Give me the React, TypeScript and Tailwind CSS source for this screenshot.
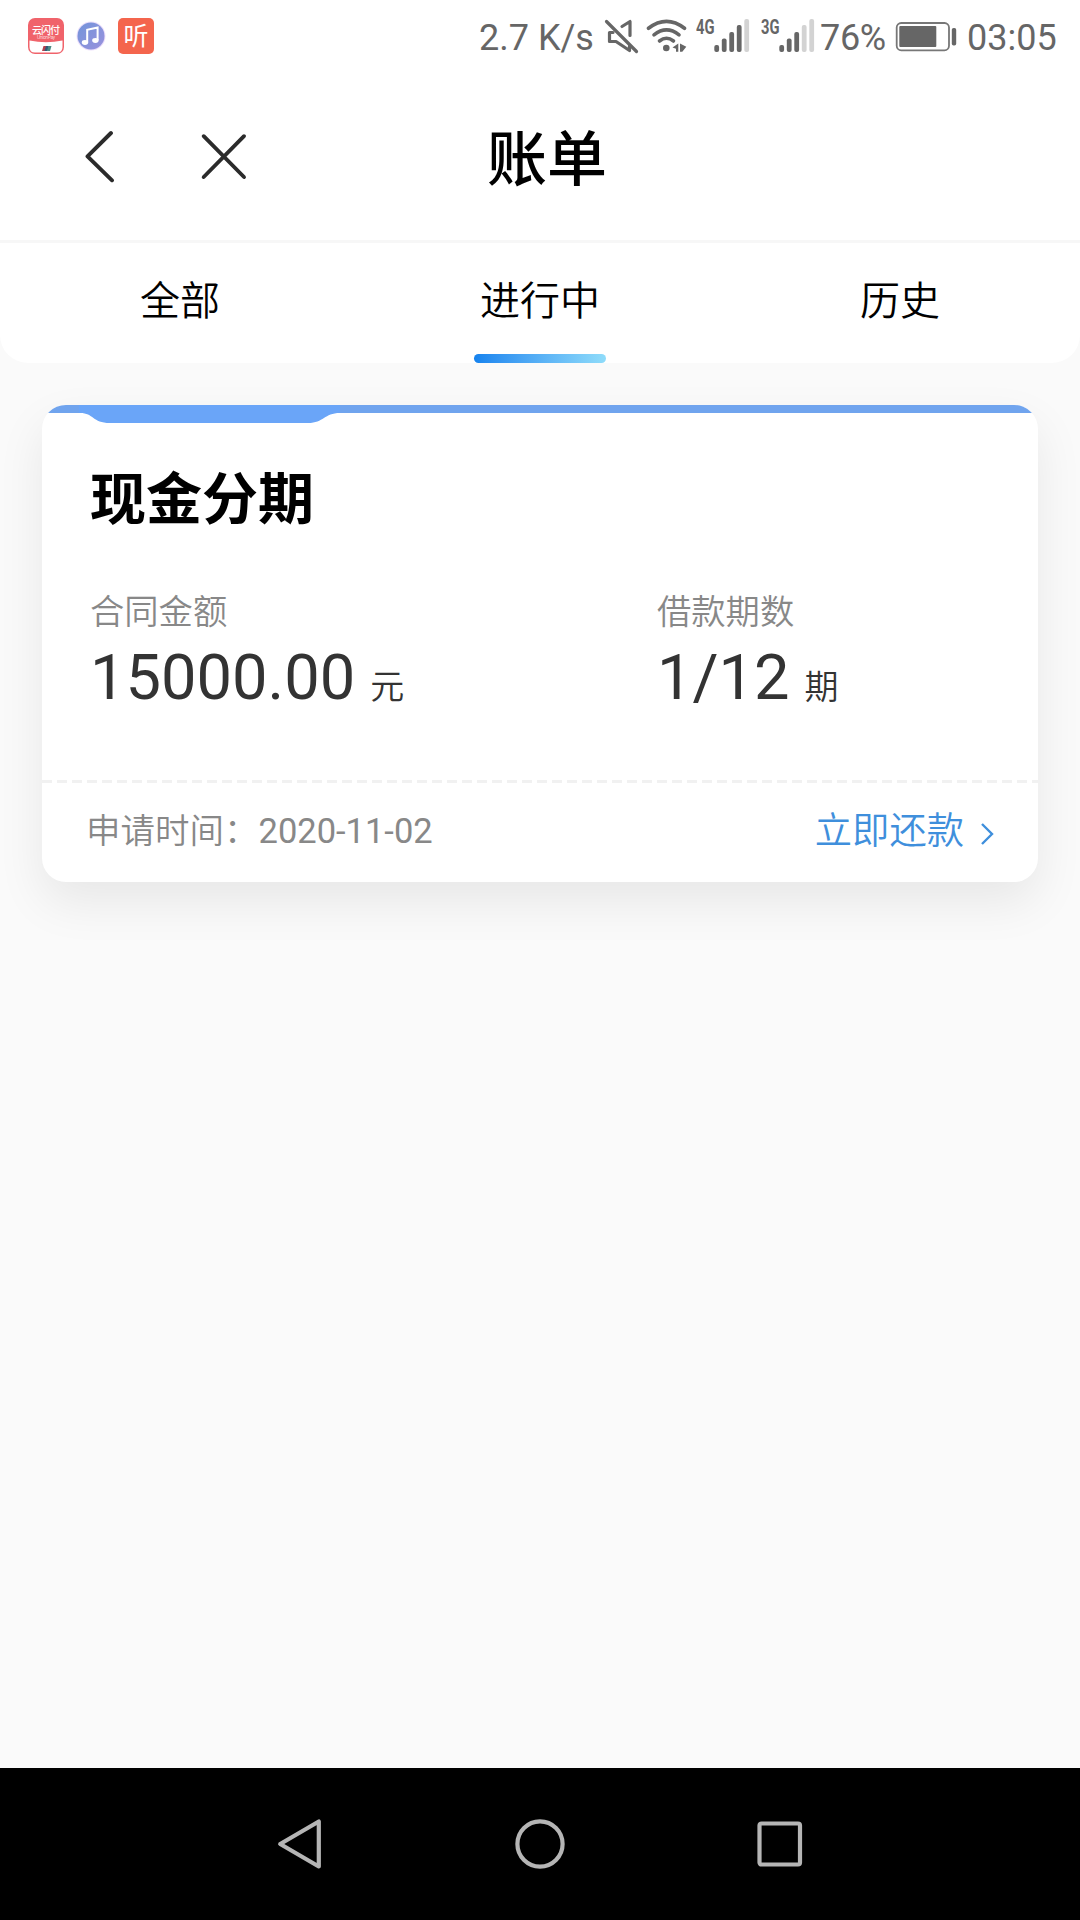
const FONT = "font-[Roboto,'Noto_Sans_CJK_SC',sans-serif]";

function Signal({ label, strong }: { label: string; strong: number }) {
  const tops = [45, 38.5, 32, 25, 19];
  return (
    <svg className="h-[72px] w-[56px] shrink-0" viewBox="0 0 56 72">
      <text x="0" y="33.6" fontSize="20" fontWeight="700" textLength="18.5" lengthAdjust="spacingAndGlyphs" fill="#666">
        {label}
      </text>
      {tops.map((t, i) => (
        <rect key={t} x={18.3 + i * 7.5} y={t} width="4.8" height={52 - t} rx="2" fill={i < strong ? "#666" : "#d3d3d3"} />
      ))}
    </svg>
  );
}

function StatusBar() {
  return (
    <div className="flex h-[72px] items-center bg-white text-[36px] leading-[42px] text-[#666]">
      <svg className="ml-[28px] size-9 shrink-0" viewBox="0 0 36 36">
        <defs>
          <clipPath id="payClip"><rect width="36" height="36" rx="7" /></clipPath>
        </defs>
        <g clipPath="url(#payClip)">
          <rect width="36" height="36" fill="#f0636b" />
          <path d="M1.5 22.5Q18 26 34.5 22.5V29Q34.5 34.5 29 34.5H7Q1.5 34.5 1.5 29Z" fill="#fff" />
        </g>
        <text x="4" y="15.5" fontSize="10" fontWeight="500" fill="#fff" textLength="28">云闪付</text>
        <text x="9" y="21" fontSize="5" fill="#fbd0d2" textLength="18">UnionPay</text>
        <path d="M15.5 28H19L17.5 33H14Z" fill="#b5404c" />
        <path d="M18 28H21L19.5 33H16.5Z" fill="#345a78" />
        <path d="M20.5 28H23.5L22 33H19Z" fill="#4a8b83" />
      </svg>
      <svg className="ml-[12px] size-[30px] shrink-0" viewBox="0 0 30 30">
        <defs>
          <linearGradient id="music" x1="0" y1="0" x2="1" y2="1">
            <stop offset="0" stopColor="#7294da" />
            <stop offset="1" stopColor="#9a92dd" />
          </linearGradient>
        </defs>
        <circle cx="15" cy="15" r="14.5" fill="#ecdffb" />
        <circle cx="15" cy="15" r="13.5" fill="url(#music)" />
        <path d="M11.2 21.3V8.8L21.6 6.5V19.3" fill="none" stroke="#fff" strokeWidth="2" />
        <ellipse cx="9" cy="21.5" rx="3.2" ry="2.4" fill="#fff" />
        <ellipse cx="19.4" cy="19.5" rx="3.2" ry="2.4" fill="#fff" />
      </svg>
      <div className="ml-[12px] flex size-9 shrink-0 items-center justify-center rounded-[5px] bg-[#f4654d] text-[25px] leading-9 text-white">
        <span className="mt-px">听</span>
      </div>

      <span className="mt-[3px] ml-auto w-[115px] whitespace-nowrap">2.7 K/s</span>
      <svg className="ml-[10px] h-[72px] w-[36px] shrink-0" viewBox="604 0 36 72" fill="none" stroke="#666" strokeWidth="3.2" strokeLinejoin="round" strokeLinecap="round">
        <path d="M606.5 21.5L636.5 51.5" />
        <path d="M613 32.5H609.5V41.5H616L629.5 50.5V46" />
        <path d="M622 26.5L630 21.5V35.5" />
      </svg>
      <svg className="ml-[6px] h-[72px] w-[41px] shrink-0" viewBox="646 0 41 72" fill="none" stroke="#666" strokeWidth="3.6" strokeLinecap="round">
        <path d="M648.5 28.3Q666.5 14.5 684.5 28.3" />
        <path d="M654 34.8Q666.5 25 679 34.8" />
        <path d="M659.5 41Q666.5 35.5 673.5 41" />
        <circle cx="666.3" cy="48" r="3.3" fill="#666" stroke="none" />
        <path d="M672.5 47.5L678.3 43.5V51.8H676V48.8ZM680 43.5L686.3 46.7L682.3 51.8H680Z" fill="#666" stroke="none" />
      </svg>
      <div className="ml-[9px] flex gap-[9px]">
        <Signal label="4G" strong={4} />
        <Signal label="3G" strong={3} />
      </div>
      <span className="mt-[3px] ml-[3px] w-[66px] whitespace-nowrap tracking-[-0.3px]">76%</span>
      <svg className="ml-[9px] h-[72px] w-[62px] shrink-0" viewBox="895 0 62 72">
        <rect x="896.7" y="23" width="52.3" height="27.3" rx="4.5" fill="none" stroke="#777" strokeWidth="1.8" />
        <rect x="899.3" y="26" width="37" height="21" rx="1" fill="#666" />
        <rect x="951.8" y="28" width="4.4" height="17.5" rx="1.8" fill="#666" />
      </svg>
      <span className="mt-[3px] mr-[18px] ml-[10px] w-[95px] whitespace-nowrap">03:05</span>
    </div>
  );
}

function Header() {
  return (
    <header className="flex h-[171px] items-center border-b-3 border-[#f7f7f7] bg-white">
      <svg className="ml-[84px] h-[54px] w-[32px]" viewBox="84 129 32 54" fill="none" stroke="#2b2b2b" strokeWidth="3.9" strokeLinecap="round" strokeLinejoin="round">
        <path d="M111 133L87.5 156.3L112 180.3" />
      </svg>
      <svg className="ml-[84px] h-[54px] w-[48px]" viewBox="200 129 48 54" fill="none" stroke="#2b2b2b" strokeWidth="3.9" strokeLinecap="round">
        <path d="M203.7 136.2L244 177M244 136.2L203.7 177" />
      </svg>
      <h1 className="mt-[10px] ml-[239px] text-[60px] leading-[72px] font-medium text-black">账单</h1>
    </header>
  );
}

function Tabs() {
  const tabs = ["全部", "进行中", "历史"];
  return (
    <nav className="grid h-[120px] grid-cols-3 rounded-b-[28px] bg-white text-[40px] leading-[60px] font-[350] text-black">
      {tabs.map((t, i) => (
        <div key={t} className="flex flex-col items-center justify-between pt-[29px]">
          <span>{t}</span>
          {i === 1 && <span className="h-[9px] w-[132px] rounded-full bg-linear-to-r from-[#1583ee] to-[#8fdcfa]" />}
        </div>
      ))}
    </nav>
  );
}

function Amount({ label, value, unit }: { label: string; value: string; unit: string }) {
  return (
    <div>
      <div className="-ml-px text-[34.3px] leading-[50px] font-[350] text-[#888]">{label}</div>
      <div className="mt-[2px] flex items-baseline leading-[76px] text-[#333]">
        <span className="-ml-px text-[63.2px]">{value}</span>
        <span className="ml-[15px] text-[34px] font-[350]">{unit}</span>
      </div>
    </div>
  );
}

function BillCard() {
  return (
    <section className="mx-[42px] mt-[42px] flex h-[477px] flex-col overflow-hidden rounded-[24px] bg-white shadow-[0_20px_48px_rgba(0,0,0,0.08)]">
      <svg className="h-[18px] w-[996px] shrink-0" viewBox="0 0 996 18">
        <rect width="996" height="8" fill="#70a4ee" />
        <path d="M37 0V8H38C52 8 50 18 68 18H266C282 18 282 8 298 8V0Z" fill="#6aa5f8" />
      </svg>
      <h2 className="mt-[35px] ml-[48px] text-[56px] leading-[84px] font-bold text-black">现金分期</h2>
      <div className="mt-[44.5px] grid grid-cols-[567px_1fr] pl-[49px]">
        <Amount label="合同金额" value="15000.00" unit="元" />
        <Amount label="借款期数" value="1/12" unit="期" />
      </div>
      <div className="mt-auto h-[3px] shrink-0 bg-[repeating-linear-gradient(90deg,#f1f1f1_0,#f1f1f1_10px,#fff_10px,#fff_15px)]" />
      <div className="flex h-[99px] shrink-0 items-center justify-between pr-[43px] pb-[2px] pl-[44px]">
        <span className="text-[34.5px] text-[#888]"><span className="font-[350]">申请时间：</span>2020-11-02</span>
        <a className="flex items-center text-[37.3px] font-[350] text-[#3f8fdc]">
          立即还款
          <svg className="mt-[5px] ml-[16px] h-[26px] w-[15px]" viewBox="0 0 15 26" fill="none" stroke="currentColor" strokeWidth="2.4">
            <path d="M2 3L12 13L2 23" />
          </svg>
        </a>
      </div>
    </section>
  );
}

function NavBar() {
  return (
    <footer className="flex h-[152px] items-center justify-center gap-[188px] bg-black">
      <svg className="size-[52px]" viewBox="0 0 52 52" fill="none" stroke="#b5b5b5" strokeWidth="4.2" strokeLinejoin="round">
        <path d="M6.2 26L44.8 3.5V48.5Z" />
      </svg>
      <svg className="size-[52px]" viewBox="0 0 52 52" fill="none" stroke="#b5b5b5" strokeWidth="4.2">
        <circle cx="26" cy="26" r="22.6" />
      </svg>
      <svg className="size-[52px]" viewBox="0 0 52 52" fill="none" stroke="#b5b5b5" strokeWidth="4.2">
        <rect x="5.5" y="5.5" width="40.5" height="41" rx="2" />
      </svg>
    </footer>
  );
}

export default function App() {
  return (
    <div className={`flex h-[1920px] w-[1080px] flex-col overflow-hidden bg-[#fafafa] ${FONT}`}>
      <StatusBar />
      <Header />
      <Tabs />
      <main className="flex-1">
        <BillCard />
      </main>
      <NavBar />
    </div>
  );
}
